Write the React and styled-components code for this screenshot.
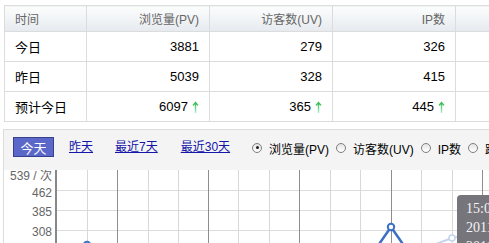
import React from "react";
import styled, { createGlobalStyle } from "styled-components";

const GlobalStyle = createGlobalStyle`
  html, body { margin: 0; padding: 0; background: #fff; overflow: hidden; }
  body { font-family: "Liberation Sans", "Noto Sans CJK SC", sans-serif; }
`;

const Page = styled.div`
  width: 489px;
  height: 243px;
  overflow: hidden;
  padding: 5px 0 0 3px;
  box-sizing: border-box;
`;

const StatsTable = styled.table`
  margin-left: 1px;
  border-collapse: collapse;
  table-layout: fixed;
  width: 574px;
`;

const Col = styled.col`
  width: ${(p) => p.$w}px;
`;

const HeadCell = styled.th`
  height: 25px;
  padding: 0 10px;
  border: 1px solid #dcdcdc;
  background: linear-gradient(#fcfdfd, #e6eaef);
  color: #666;
  font-size: 12px;
  font-weight: normal;
  text-align: ${(p) => (p.$left ? "left" : "right")};
  white-space: nowrap;
`;

const Cell = styled.td`
  height: 29px;
  padding: 0 10px;
  border: 1px solid #dcdcdc;
  color: #000;
  font-size: 13px;
  text-align: ${(p) => (p.$left ? "left" : "right")};
  white-space: nowrap;
`;

const Arrow = styled.svg`
  display: inline-block;
  vertical-align: -2px;
  margin-left: 4px;
  width: 7px;
  height: 12px;
`;

const UpArrow = ({ id }) => (
  <Arrow viewBox="0 0 7 12">
    <defs>
      <linearGradient id={id} x1="0" y1="0" x2="0" y2="1">
        <stop offset="0" stopColor="#34b84a" />
        <stop offset="1" stopColor="#a8ecd4" />
      </linearGradient>
    </defs>
    <path d="M1 4.5 L3.5 1.5 L6 4.5 M3.5 1.5 L3.5 12" stroke={`url(#${id})`} strokeWidth="1.4" fill="none" />
  </Arrow>
);

const Panel = styled.div`
  margin-top: 7px;
  border-top: 1px solid #dcdcdc;
  border-left: 1px solid #dcdcdc;
  width: 600px;
`;

const Toolbar = styled.div`
  display: flex;
  align-items: flex-start;
  height: 40px;
  box-sizing: border-box;
  padding: 7px 0 0 9px;
  background: #f4f4f4;
  white-space: nowrap;
`;

const ActiveButton = styled.span`
  display: inline-flex;
  align-items: center;
  justify-content: center;
  width: 41px;
  height: 20px;
  box-sizing: border-box;
  background: #5b68c9;
  border: 1px solid #36418e;
  color: #fff;
  font-size: 13px;
  margin-right: 15px;
`;

const RangeLink = styled.a`
  font-size: 12px;
  line-height: 20px;
  color: #1515a8;
  text-decoration: underline;
  margin-right: ${(p) => p.$mr}px;
  cursor: pointer;
`;

const RadioItem = styled.label`
  display: inline-flex;
  align-items: center;
  margin-right: 8px;
  font-size: 12px;
  line-height: 20px;
  color: #000;
  padding-top: 3px;
`;

const RadioDot = styled.span`
  position: relative;
  width: 10px;
  height: 10px;
  box-sizing: border-box;
  border: 1px solid #7e7e7e;
  border-radius: 50%;
  background: linear-gradient(#e4e4e4, #fff);
  margin-left: -1px;
  margin-right: 7px;
  margin-top: -5px;
  &::after {
    content: "";
    display: ${(p) => (p.$on ? "block" : "none")};
    position: absolute;
    left: 2.5px;
    top: 2.5px;
    width: 3px;
    height: 3px;
    border-radius: 50%;
    background: #1e1e1e;
  }
`;

const ChartArea = styled.div`
  position: relative;
  height: 80px;
  background: #fff;
  overflow: hidden;
`;

const ChartSvg = styled.svg`
  display: block;
  width: 600px;
  height: 80px;
`;

const Tooltip = styled.div`
  position: absolute;
  left: 453px;
  top: 25px;
  width: 120px;
  padding: 4px 9px;
  border-radius: 4px;
  background: #75757b;
  color: #f4f4f4;
  font-family: "Liberation Serif", serif;
  font-size: 14px;
  line-height: 19px;
  white-space: nowrap;
`;

const lightX = [83, 144, 174, 234, 265, 326, 356, 417, 448];
const darkX = [113, 204, 295, 387, 478];
const gridY = [20, 40, 60];
const labels = [
  { y: 10, t: "539 / 次" },
  { y: 27, t: "462" },
  { y: 46, t: "385" },
  { y: 66, t: "308" },
];

const rows = [
  { name: "今日", v: ["3881", "279", "326"] },
  { name: "昨日", v: ["5039", "328", "415"] },
  { name: "预计今日", v: ["6097", "365", "445"], up: true },
];

export default function App() {
  return (
    <>
      <GlobalStyle />
      <Page>
        <StatsTable>
          <colgroup>
            <Col $w={82} />
            <Col $w={123} />
            <Col $w={123} />
            <Col $w={123} />
            <Col $w={123} />
          </colgroup>
          <thead>
            <tr>
              <HeadCell $left>时间</HeadCell>
              <HeadCell>浏览量(PV)</HeadCell>
              <HeadCell>访客数(UV)</HeadCell>
              <HeadCell>IP数</HeadCell>
              <HeadCell></HeadCell>
            </tr>
          </thead>
          <tbody>
            {rows.map((r, ri) => (
              <tr key={r.name}>
                <Cell $left>{r.name}</Cell>
                {r.v.map((v, i) => (
                  <Cell key={i}>
                    {v}
                    {r.up && <UpArrow id={`g${ri}${i}`} />}
                  </Cell>
                ))}
                <Cell></Cell>
              </tr>
            ))}
          </tbody>
        </StatsTable>

        <Panel>
          <Toolbar>
            <ActiveButton>今天</ActiveButton>
            <RangeLink $mr={22}>昨天</RangeLink>
            <RangeLink $mr={23}>最近7天</RangeLink>
            <RangeLink $mr={23}>最近30天</RangeLink>
            <RadioItem><RadioDot $on />浏览量(PV)</RadioItem>
            <RadioItem><RadioDot />访客数(UV)</RadioItem>
            <RadioItem><RadioDot />IP数</RadioItem>
            <RadioItem><RadioDot />跳出率</RadioItem>
          </Toolbar>
          <ChartArea>
            <ChartSvg viewBox="0 0 600 80">
              {gridY.map((y) => (
                <rect key={y} x="53" y={y} width="547" height="1" fill="#dcdcdc" />
              ))}
              {lightX.map((x) => (
                <rect key={x} x={x} y="0" width="1" height="80" fill="#d8d8d8" />
              ))}
              {darkX.map((x) => (
                <rect key={x} x={x} y="0" width="1" height="80" fill="#8e8e8e" />
              ))}
              <rect x="51" y="0" width="2" height="80" fill="#888" />
              {labels.map((l) => (
                <text key={l.t} x="48" y={l.y} textAnchor="end" fontSize="12" fill="#666"
                  fontFamily='"Liberation Sans", "Noto Sans CJK SC", sans-serif'>{l.t}</text>
              ))}
              <polyline points="416,80 448,68 490,60" fill="none" stroke="#c4d4ee" strokeWidth="2" />
              <circle cx="448" cy="68" r="3" fill="#fff" stroke="#c4d4ee" strokeWidth="1.5" />
              <polyline points="364,90 387,57 410,90" fill="none" stroke="#3d6fc4" strokeWidth="2.5" />
              <circle cx="387" cy="57" r="3.2" fill="#fff" stroke="#3d6fc4" strokeWidth="2" />
              <circle cx="83" cy="75" r="3.2" fill="#fff" stroke="#3d6fc4" strokeWidth="2" />
            </ChartSvg>
            <Tooltip>
              15:00~16:00<br />
              2011-05-20：312<br />
              2011-05-19：305
            </Tooltip>
          </ChartArea>
        </Panel>
      </Page>
    </>
  );
}
